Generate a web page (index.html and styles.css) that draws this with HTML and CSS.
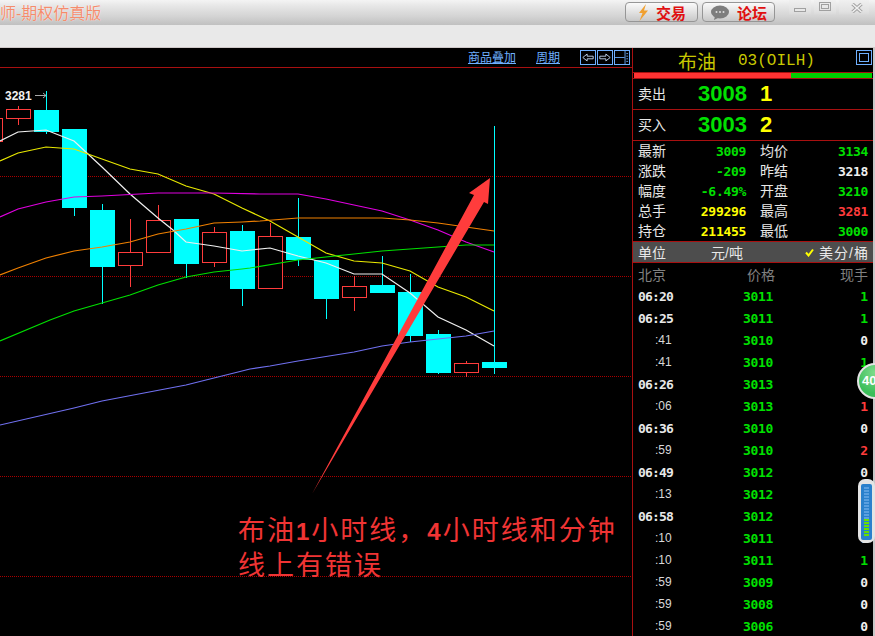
FILE: index.html
```html
<!DOCTYPE html>
<html lang="en">
<head>
    <meta charset="UTF-8">
    <meta name="viewport" content="width=device-width, initial-scale=1.0">
    <title>期权仿真版</title>
    <link rel="stylesheet" href="styles.css">
</head>

<body>
    <header class="title-bar">
        <h1 class="app-name">师-期权仿真版</h1>
        <div class="title-actions">
            <button class="pill-button">
                <svg width="12" height="17" viewBox="0 0 12 17"><path d="M9 0 L2 9 L5.5 9 L2.5 17 L11 6.5 L7 6.5 Z" fill="#f0a030"/></svg>
                交易
            </button>
            <button class="pill-button">
                <svg width="20" height="15" viewBox="0 0 20 15"><ellipse cx="10" cy="7" rx="9" ry="6.5" fill="#7d7d7d"/><path d="M5 11 L4 15 L10 12 Z" fill="#7d7d7d"/><circle cx="6.5" cy="7" r="1" fill="#ddd"/><circle cx="10" cy="7" r="1" fill="#ddd"/><circle cx="13.5" cy="7" r="1" fill="#ddd"/></svg>
                论坛
            </button>
        </div>
        <div class="window-controls">
            <span class="win-btn"><svg width="12" height="12" viewBox="0 0 12 12"><rect x="0.5" y="7.5" width="11" height="3" fill="#e8e8e8" stroke="#a0a0a0"/></svg></span>
            <span class="win-btn"><svg width="12" height="12" viewBox="0 0 12 12"><rect x="0.5" y="1.5" width="11" height="8" fill="none" stroke="#a0a0a0"/><rect x="2.5" y="3.5" width="7" height="4" fill="#e8e8e8" stroke="#a0a0a0"/></svg></span>
            <span class="win-btn win-close"><svg width="12" height="10" viewBox="0 0 12 10"><path d="M1.5 1 L10.5 9 M10.5 1 L1.5 9" stroke="#a0a0a0" stroke-width="3.4"/><path d="M1.5 1 L10.5 9 M10.5 1 L1.5 9" stroke="#f0f0f0" stroke-width="1.6"/></svg></span>
        </div>
    </header>
    <div class="tool-bar"></div>

    <main class="terminal">
        <section class="chart">
            <div class="chart-head">
                <a class="chart-link">商品叠加</a>
                <a class="chart-link">周期</a>
                <div class="chart-btns">
                    <svg class="chart-btn" width="16" height="15" viewBox="0 0 16 15"><path d="M2 7.5 L7 3.5 V6 H14 V9 H7 V11.5 Z" fill="none" stroke="#cfe4ff"/></svg>
                    <svg class="chart-btn" width="16" height="15" viewBox="0 0 16 15"><path d="M14 7.5 L9 3.5 V6 H2 V9 H9 V11.5 Z" fill="none" stroke="#cfe4ff"/></svg>
                    <svg class="chart-btn" width="16" height="15" viewBox="0 0 16 15"><path d="M0 7.5 H11 M11.5 0 V15" stroke="#6fb0ff"/><path d="M13 3 H15 M13 6 H15 M13 9 H15 M13 12 H15" stroke="#6fb0ff"/></svg>
                </div>
            </div>

            <svg class="chart-canvas" width="632" height="568" viewBox="0 68 632 568">
                <g class="grid-lines">
                    <path d="M0 176.5 H632 M0 276.5 H632 M0 376.5 H632 M0 476.5 H632 M0 576.5 H632"/>
                </g>

                <g class="wick-up">
                    <path d="M46.5 91 V134 M74.5 129 V216 M102.5 204 V304 M186.5 219 V278 M242.5 225 V306 M298.5 198 V266 M326.5 260 V319 M382.5 256 V293 M410.5 274 V342 M438.5 330 V374 M494.5 126 V374"/>
                </g>
                <g class="candle-up">
                    <rect x="34" y="110" width="25" height="22"/>
                    <rect x="62" y="129" width="25" height="79"/>
                    <rect x="90" y="210" width="25" height="57"/>
                    <rect x="174" y="219" width="25" height="45"/>
                    <rect x="230" y="231" width="25" height="58"/>
                    <rect x="286" y="237" width="25" height="23"/>
                    <rect x="314" y="260" width="25" height="39"/>
                    <rect x="370" y="285" width="25" height="8"/>
                    <rect x="398" y="292" width="25" height="44"/>
                    <rect x="426" y="334" width="25" height="39"/>
                    <rect x="482" y="362" width="25" height="6"/>
                </g>
                <g class="wick-down">
                    <path d="M18.5 106 V109 M18.5 118 V125 M130.5 219 V252 M130.5 266 V287 M158.5 205 V220 M214.5 227 V232 M214.5 263 V267 M270.5 223 V236 M354.5 276 V286 M354.5 298 V311 M466.5 361 V363 M466.5 373 V377"/>
                </g>
                <g class="candle-down">
                    <rect x="-20.5" y="118.5" width="23" height="23"/>
                    <rect x="6.5" y="109.5" width="24" height="9"/>
                    <rect x="118.5" y="252.5" width="24" height="13"/>
                    <rect x="146.5" y="220.5" width="24" height="32"/>
                    <rect x="202.5" y="232.5" width="24" height="30"/>
                    <rect x="258.5" y="236.5" width="24" height="52"/>
                    <rect x="342.5" y="286.5" width="24" height="11"/>
                    <rect x="454.5" y="363.5" width="24" height="9"/>
                </g>

                <g class="ma-lines">
                    <polyline stroke="#f0f0f0" points="0,141 18,132 46,130 74,141 102,167 130,194 158,218 173,230 186,242 214,246 242,251 270,248 298,256 326,263 354,274 382,274 410,293 438,317 466,330 494,346"/>
                    <polyline stroke="#e8e800" points="0,161 18,153 46,147 74,149 102,159 130,169 158,174 186,186 214,194 242,208 270,221 298,237 326,253 354,261 382,263 410,271 438,287 466,297 494,311"/>
                    <polyline stroke="#e000e0" points="0,217 18,209 46,202 74,197 102,196 158,193 214,193 260,194 298,194 326,199 354,205 382,211 410,220 438,230 466,242 494,252"/>
                    <polyline stroke="#f08000" points="0,275 18,268 46,258 74,251 102,247 130,242 158,234 186,229 214,223 242,222 260,221 298,218 382,218 410,220 438,223 466,227 494,231"/>
                    <polyline stroke="#00e000" points="0,341 50,320 74,311 102,303 130,295 158,285 186,277 214,272 242,269 250,268 298,260 354,254 382,251 438,247 466,245 494,245"/>
                    <polyline stroke="#7070f0" points="0,425 74,408 102,401 186,385 250,369 270,366 298,361 354,352 382,346 410,342 438,339 466,336 494,331"/>
                </g>

                <text class="high-label" x="5" y="100">3281</text>
                <path d="M35 95.5 H46 M43 93 L46 95.5 L43 98" stroke="#a8a8a8" fill="none"/>

                <polygon class="arrow" points="312,494 474,195 469,193 490,178 488,204 484,202"/>
            </svg>

            <p class="note">
                <span class="note-line">布油<b>1</b>小时线，<b>4</b>小时线和分钟</span>
                <span class="note-line">线上有错误</span>
            </p>
        </section>

        <aside class="quote">
            <div class="quote-title">
                <span class="quote-name">布油</span>
                <span class="quote-code">03(OILH)</span>
                <svg class="quote-max" width="16" height="15" viewBox="0 0 16 15"><rect x="0.5" y="0.5" width="15" height="14" fill="none" stroke="#6fb0ff"/><rect x="3.5" y="3.5" width="9" height="8" fill="none" stroke="#6fb0ff"/></svg>
            </div>
            <div class="ratio-wrap"><div class="ratio-red" style="width: 66%"></div><div class="ratio-green"></div></div>

            <div class="book-row">
                <span class="book-label">卖出</span>
                <span class="book-price">3008</span>
                <span class="book-size">1</span>
            </div>
            <div class="book-row">
                <span class="book-label">买入</span>
                <span class="book-price">3003</span>
                <span class="book-size">2</span>
            </div>

            <div class="stats">
                <div class="stat-row">
                    <div class="stat"><span>最新</span><b class="green">3009</b></div>
                    <div class="stat"><span>均价</span><b class="green">3134</b></div>
                </div>
                <div class="stat-row">
                    <div class="stat"><span>涨跌</span><b class="green">-209</b></div>
                    <div class="stat"><span>昨结</span><b class="white">3218</b></div>
                </div>
                <div class="stat-row">
                    <div class="stat"><span>幅度</span><b class="green">-6.49%</b></div>
                    <div class="stat"><span>开盘</span><b class="green">3210</b></div>
                </div>
                <div class="stat-row">
                    <div class="stat"><span>总手</span><b class="yellow">299296</b></div>
                    <div class="stat"><span>最高</span><b class="red">3281</b></div>
                </div>
                <div class="stat-row">
                    <div class="stat"><span>持仓</span><b class="yellow">211455</b></div>
                    <div class="stat"><span>最低</span><b class="green">3000</b></div>
                </div>
            </div>

            <div class="unit-row">
                <span>单位</span>
                <span class="unit-yuan">元/吨</span>
                <svg class="unit-check" width="9" height="9" viewBox="0 0 9 9"><path d="M1 4.5 L3.5 7.5 L8 1.5" fill="none" stroke="#ffff00" stroke-width="2"/></svg>
                <span class="unit-usd">美分/桶</span>
            </div>

            <div class="tick-head">
                <span>北京</span>
                <span>价格</span>
                <span class="tick-qty">现手</span>
            </div>

            <div class="tick"><b class="tick-time">06:20</b><b class="tick-price">3011</b><b class="tick-qty green">1</b></div>
            <div class="tick"><b class="tick-time">06:25</b><b class="tick-price">3011</b><b class="tick-qty green">1</b></div>
            <div class="tick"><span class="tick-sec">:41</span><b class="tick-price">3010</b><b class="tick-qty white">0</b></div>
            <div class="tick"><span class="tick-sec">:41</span><b class="tick-price">3010</b><b class="tick-qty green">1</b></div>
            <div class="tick"><b class="tick-time">06:26</b><b class="tick-price">3013</b><b class="tick-qty red">1</b></div>
            <div class="tick"><span class="tick-sec">:06</span><b class="tick-price">3013</b><b class="tick-qty red">1</b></div>
            <div class="tick"><b class="tick-time">06:36</b><b class="tick-price">3010</b><b class="tick-qty white">0</b></div>
            <div class="tick"><span class="tick-sec">:59</span><b class="tick-price">3010</b><b class="tick-qty red">2</b></div>
            <div class="tick"><b class="tick-time">06:49</b><b class="tick-price">3012</b><b class="tick-qty white">0</b></div>
            <div class="tick"><span class="tick-sec">:13</span><b class="tick-price">3012</b><b class="tick-qty white">0</b></div>
            <div class="tick"><b class="tick-time">06:58</b><b class="tick-price">3012</b><b class="tick-qty white">0</b></div>
            <div class="tick"><span class="tick-sec">:10</span><b class="tick-price">3011</b><b class="tick-qty white">0</b></div>
            <div class="tick"><span class="tick-sec">:10</span><b class="tick-price">3011</b><b class="tick-qty green">1</b></div>
            <div class="tick"><span class="tick-sec">:59</span><b class="tick-price">3009</b><b class="tick-qty white">0</b></div>
            <div class="tick"><span class="tick-sec">:59</span><b class="tick-price">3008</b><b class="tick-qty white">0</b></div>
            <div class="tick"><span class="tick-sec">:59</span><b class="tick-price">3006</b><b class="tick-qty white">0</b></div>
        </aside>

        <!-- floating widgets over the right edge -->
        <div class="speed-ball">40</div>
        <div class="meter"><div class="meter-bars"></div></div>
    </main>
</body>
</html>
```

FILE: styles.css
```css
/* Global Styles */
* {
    box-sizing: border-box;
    margin: 0;
    padding: 0;
}

html, body {
    height: 100%;
    overflow: hidden;
}

body {
    font-family: "Liberation Sans", "Noto Sans CJK SC", sans-serif;
    background-color: #000;
    display: flex;
    flex-direction: column;
}

/* Title bar */
.title-bar {
    height: 25px;
    flex: none;
    display: flex;
    background: linear-gradient(#f4f4f4, #e6e6e6 25%, #d4d4d4 65%, #c0c0c0);
}

.app-name {
    font-size: 16px;
    font-weight: normal;
    line-height: 27px;
    color: #f48c6c;
    text-shadow: 0 0 1px #fff;
}

.title-actions {
    display: flex;
    gap: 4px;
    margin-left: auto;
    padding-top: 2px;
}

.pill-button {
    width: 73px;
    height: 20px;
    display: flex;
    align-items: center;
    justify-content: center;
    gap: 7px;
    font-family: inherit;
    font-size: 15px;
    font-weight: bold;
    color: #e01010;
    background: linear-gradient(#fafafa, #e2e2e2 50%, #c8c8c8);
    border: 1px solid #969696;
    border-radius: 4px;
}

.window-controls {
    display: flex;
    margin-left: 14px;
    width: 86px;
}

.win-btn {
    width: 22px;
    height: 15px;
    margin-right: 3px;
    display: flex;
    justify-content: center;
    background: linear-gradient(#f0f0f0, #e4e4e4 60%, transparent);
    padding-top: 1px;
}

.win-close {
    width: 30px;
    margin-right: 0;
    padding-top: 3px;
    padding-left: 5px;
}

.tool-bar {
    height: 23px;
    flex: none;
    background-color: #e9e9e9;
    border-bottom: 1px solid #cfc8c8;
}

/* Terminal */
.terminal {
    flex: 1;
    min-height: 0;
    display: flex;
    position: relative;
    background-color: #000;
    overflow: hidden;
}

/* Chart */
.chart {
    width: 632px;
    flex: none;
    position: relative;
}

.chart-head {
    height: 20px;
    display: flex;
    align-items: flex-start;
    justify-content: flex-end;
    border-bottom: 1px solid #a81010;
    padding: 2px 2px 0 0;
}

.chart-link {
    font-size: 12px;
    line-height: 16px;
    color: #6fb0ff;
    text-decoration: underline;
    margin-right: 20px;
}

.chart-btns {
    display: flex;
    gap: 1px;
}

.chart-btn {
    border: 1px solid #6fb0ff;
    display: block;
}

.chart-canvas {
    display: block;
}

.grid-lines path {
    stroke: #a80000;
    stroke-dasharray: 1 1;
    fill: none;
}

.wick-up path {
    stroke: #00ffff;
    fill: none;
}

.candle-up rect {
    fill: #00ffff;
}

.wick-down path {
    stroke: #ff3c3c;
    fill: none;
}

.candle-down rect {
    fill: #000;
    stroke: #ff3c3c;
}

.ma-lines polyline {
    fill: none;
    stroke-width: 1.2;
}

.high-label {
    font-family: "Liberation Sans", sans-serif;
    font-size: 12px;
    font-weight: bold;
    fill: #f0f0f0;
}

.arrow {
    fill: #ff3c3c;
}

.note {
    position: absolute;
    left: 238px;
    top: 466px;
    font-size: 27px;
    letter-spacing: 2px;
    line-height: 35px;
    color: #f03434;
}

.note-line {
    display: block;
    white-space: nowrap;
}

.note b {
    font-size: 24px;
}

/* Quote panel */
.quote {
    flex: 1;
    min-width: 0;
    border-left: 1px solid #a81010;
    border-right: 2px solid #c8c8c8;
    color: #e8e8e8;
    font-size: 14px;
}

.quote-title {
    height: 25px;
    display: flex;
    align-items: center;
    padding: 0 1px 0 45px;
    border-bottom: 1px solid #a81010;
    color: #c8c800;
}

.quote-name {
    font-size: 19px;
    margin-right: 22px;
}

.quote-code {
    font-family: "Liberation Mono", monospace;
    font-size: 16px;
    margin-top: 2px;
}

.quote-max {
    margin-left: auto;
    margin-bottom: 5px;
}

.ratio-wrap {
    height: 6px;
    display: flex;
    padding: 0 1px;
    border-bottom: 1px solid #a81010;
}

.ratio-red {
    background-color: #ff3333;
}

.ratio-green {
    flex: 1;
    background-color: #00d000;
}

.book-row {
    height: 31px;
    display: flex;
    align-items: center;
    border-bottom: 1px solid #a81010;
    padding-left: 5px;
}

.book-label {
    width: 60px;
    margin-top: -2px;
}

.book-price {
    width: 62px;
    font-size: 22px;
    font-weight: bold;
    color: #00e000;
}

.book-size {
    font-size: 22px;
    font-weight: bold;
    color: #ffff00;
}

.stats {
    height: 101px;
    border-bottom: 1px solid #a81010;
}

.stat-row {
    height: 20px;
    display: flex;
    align-items: center;
    padding-left: 5px;
}

.stat {
    width: 108px;
    flex: none;
    display: flex;
    justify-content: space-between;
    align-items: center;
}

.stat + .stat {
    margin-left: 14px;
}

.stat span {
    margin-top: -2px;
}

.stat b {
    font-family: "DejaVu Sans Mono", monospace;
    font-size: 13px;
    letter-spacing: -0.3px;
}

.green { color: #00e000; }
.yellow { color: #ffff00; }
.red { color: #ff3c3c; }
.white { color: #f0f0f0; }

.unit-row {
    height: 21px;
    display: flex;
    align-items: center;
    background-color: #4d4d4d;
    border-bottom: 1px solid #a81010;
    padding: 0 5px;
}

.unit-yuan {
    margin-left: 45px;
}

.unit-check {
    margin-left: auto;
    margin-right: 5px;
}

.unit-usd {
    letter-spacing: 1px;
    margin-right: -1px;
}

.tick-head {
    height: 22px;
    display: grid;
    grid-template-columns: 109px 28px 1fr;
    align-items: center;
    padding: 0 5px;
    color: #808080;
}

.tick {
    height: 22px;
    display: grid;
    grid-template-columns: 105px 32px 1fr;
    align-items: center;
    padding: 0 5px;
    font-family: "DejaVu Sans Mono", monospace;
    font-size: 13px;
}

.tick-time {
    letter-spacing: -0.8px;
    color: #e8e8e8;
}

.tick-sec {
    padding-left: 17px;
    font-family: "Liberation Sans", sans-serif;
    font-size: 12px;
    color: #d8d8d8;
}

.tick-price {
    color: #00e000;
    letter-spacing: -0.3px;
}

.tick-qty {
    text-align: right;
}

/* Floating widgets */
.speed-ball {
    position: absolute;
    left: 857px;
    top: 315px;
    width: 36px;
    height: 36px;
    padding-left: 3px;
    border-radius: 50%;
    border: 2px solid #e4e4e4;
    background: radial-gradient(circle at 50% 25%, #7fdc8c, #3cbe5a 70%);
    color: #fff;
    font-size: 13px;
    font-weight: bold;
    line-height: 32px;
}

.meter {
    position: absolute;
    left: 858px;
    top: 431px;
    width: 17px;
    height: 64px;
    padding: 5px 3px 3px 3px;
    border-radius: 7px;
    background-color: #e4e4e4;
}

.meter-bars {
    height: 100%;
    border-radius: 2px;
    background-color: #2a80cc;
    background-image:
        repeating-linear-gradient(#66e000 0 2px, transparent 2px 3px),
        repeating-linear-gradient(#5a9fe0 0 2px, transparent 2px 3px);
    background-repeat: no-repeat;
    background-size: 5px 18px, 5px 32px;
    background-position: 3px 35px, 3px 3px;
}
```
